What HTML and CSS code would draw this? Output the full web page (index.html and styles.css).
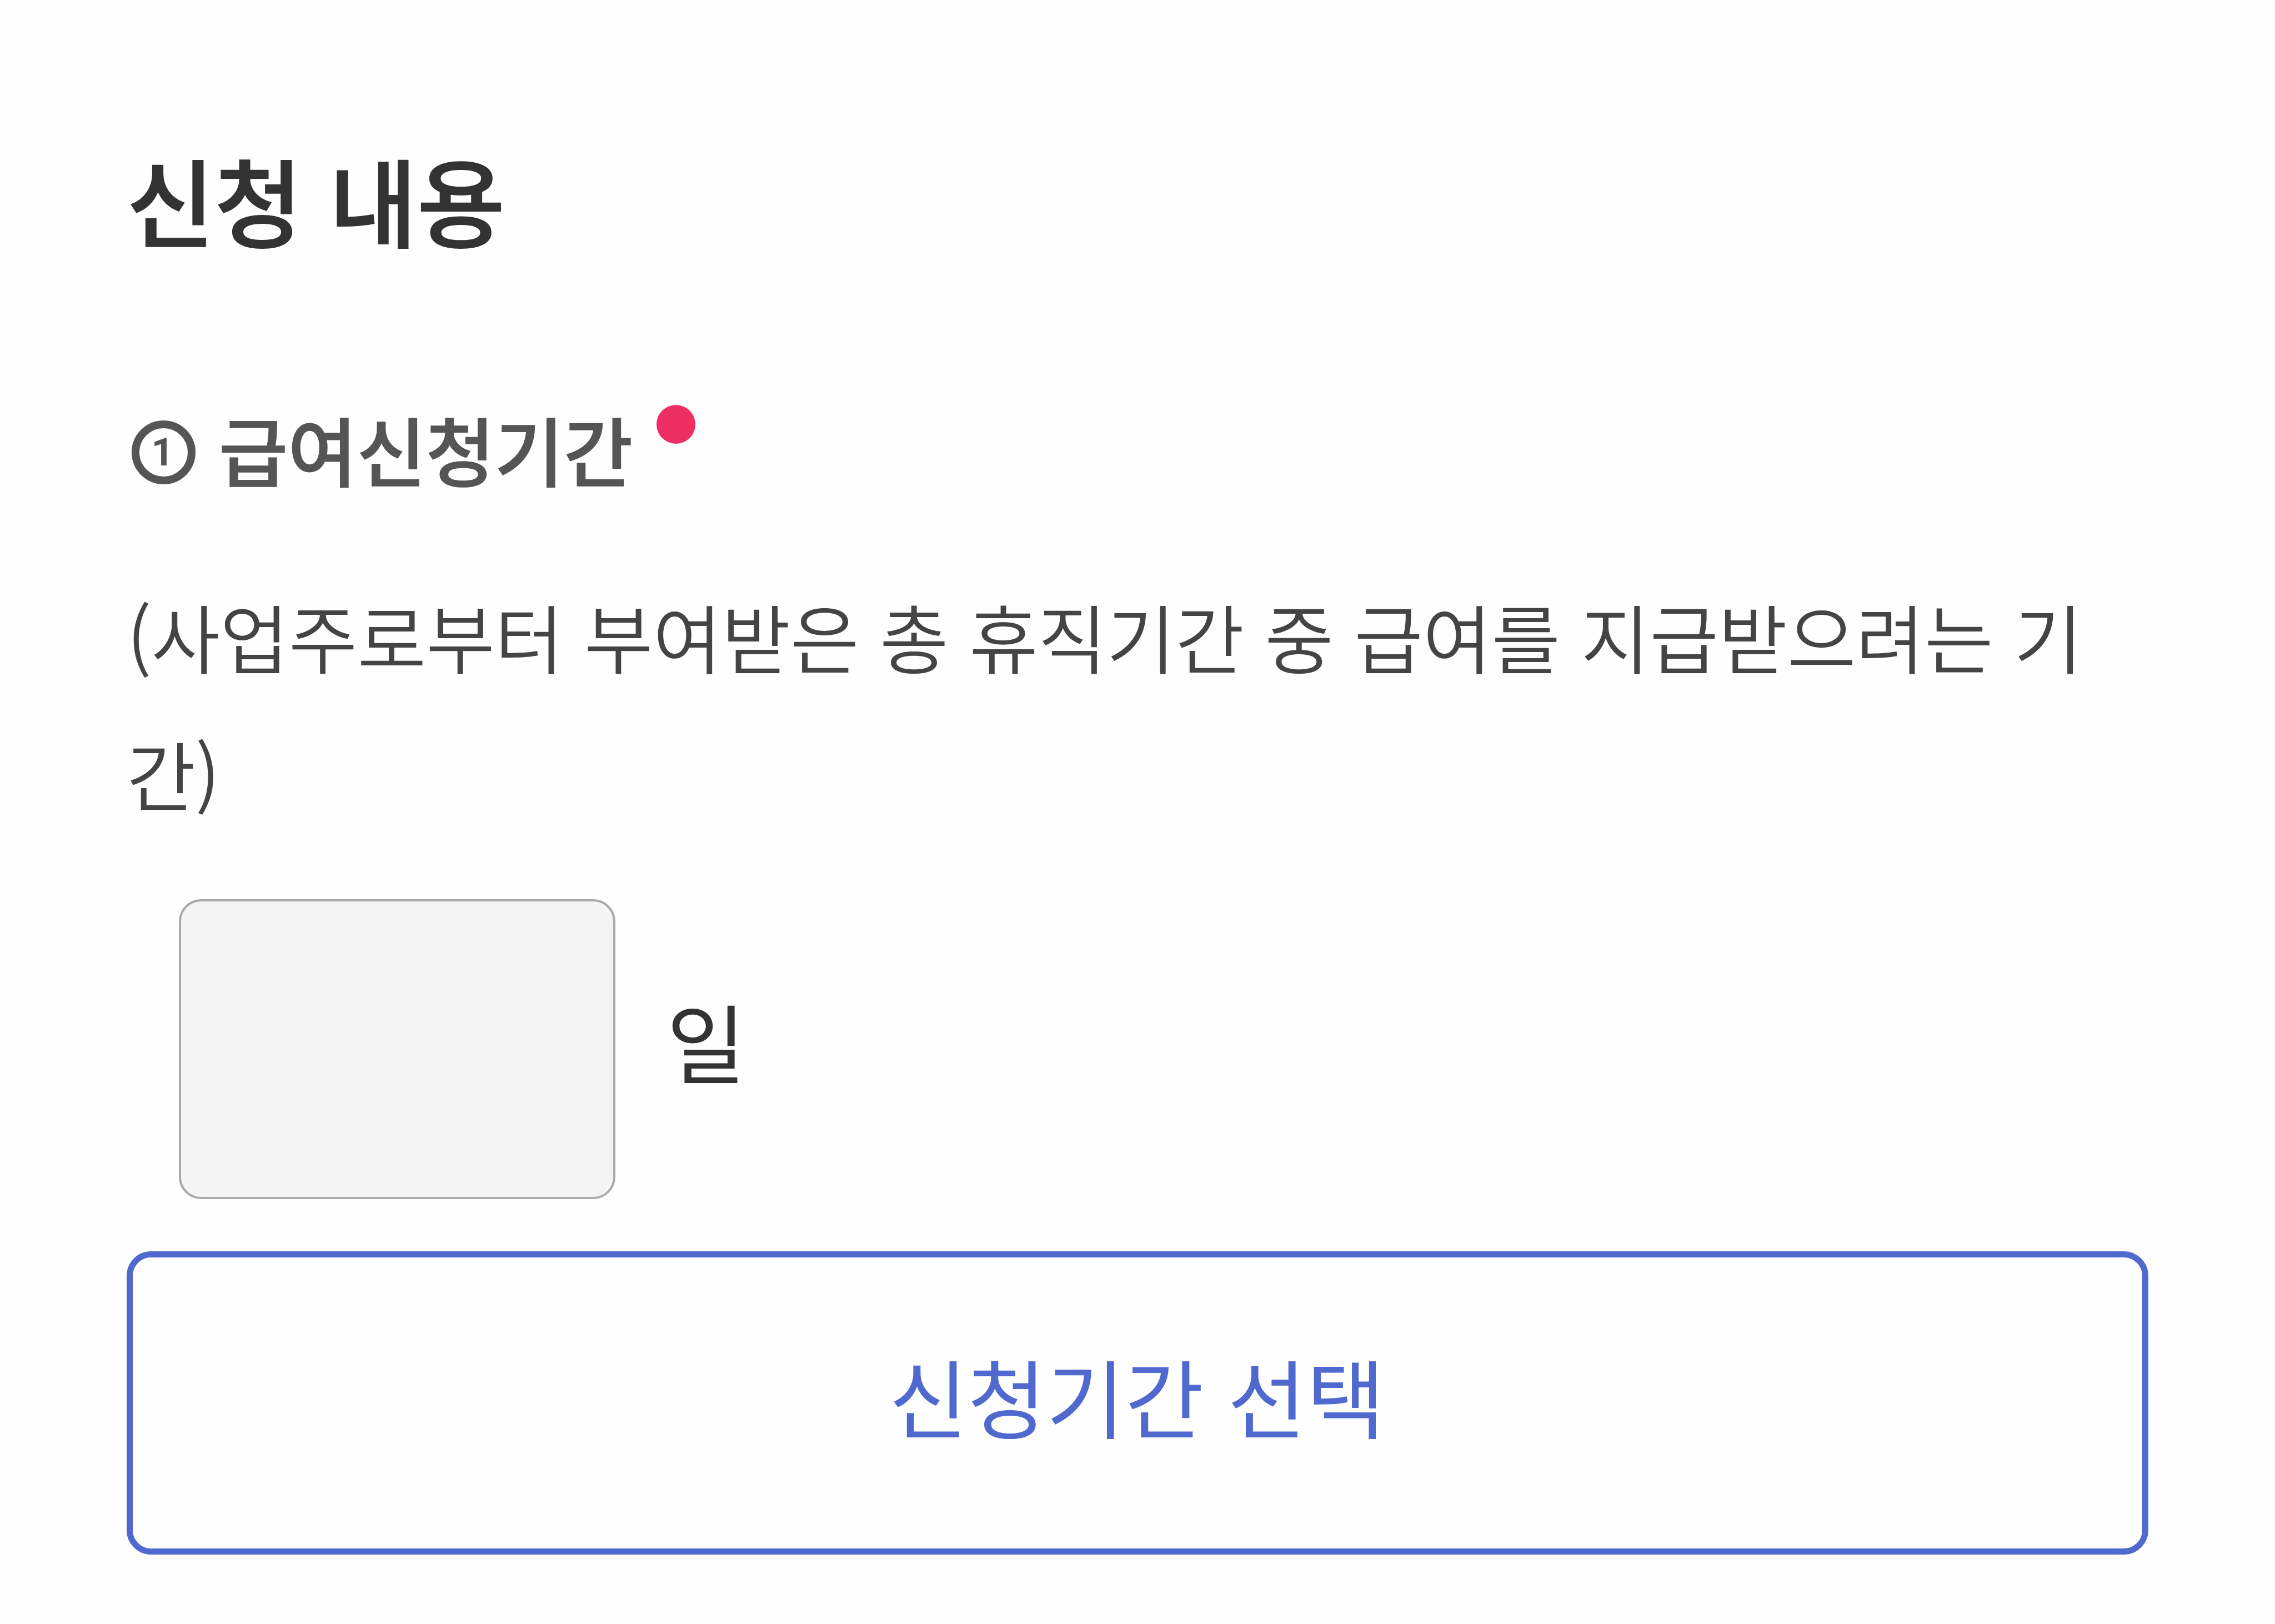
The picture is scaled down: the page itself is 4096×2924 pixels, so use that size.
FILE: index.html
```html
<!DOCTYPE html>
<html lang="ko">
<head>
  <meta charset="UTF-8">
  <meta name="viewport" content="width=device-width, initial-scale=1.0">
  <title>신청 내용</title>
  <link rel="stylesheet" href="styles.css">
</head>
<body>
  <main class="form-container">
    <h1 class="form-title">신청 내용</h1>
    <div class="field-label">
      <span class="number-icon">1</span>
      <h2>급여신청기간</h2>
      <span class="required-dot"></span>
    </div>
    <p class="field-desc">(사업주로부터 부여받은 총 휴직기간 중 급여를 지급받으려는 기<br>간)</p>
    <div class="days-row">
      <input class="days-input" type="text" aria-label="일수" readonly>
      <span class="days-unit">일</span>
    </div>
    <button class="select-button" type="button">신청기간 선택</button>
  </main>
</body>
</html>
```
FILE: styles.css
```css
* {
  box-sizing: border-box;
}

body {
  margin: 0;
  background-color: #fefefe;
  font-family: "Noto Sans CJK KR", sans-serif;
  color: #333;
}

.form-container {
  display: flex;
  flex-direction: column;
  height: 2924px;
  padding: 247px 228px 0;
  overflow: hidden;
}

.form-title {
  margin: 0;
  height: 220px;
  line-height: 220px;
  font-size: 172px;
  font-weight: 500;
  -webkit-text-stroke: 2px #333;
}

.field-label {
  display: flex;
  align-items: center;
  height: 200px;
  margin-top: 247px;
  color: #555;
}

.field-label h2 {
  margin: 0 0 14px 42px;
  line-height: 200px;
  font-size: 135px;
  font-weight: 500;
  -webkit-text-stroke: 1.5px #555;
}

.number-icon {
  display: flex;
  align-items: center;
  justify-content: center;
  width: 115px;
  height: 115px;
  margin-left: 9px;
  padding-right: 4px;
  border: 14px solid #555;
  border-radius: 50%;
  font-family: Roboto, sans-serif;
  font-size: 70px;
  font-weight: 700;
  line-height: 1;
}

.required-dot {
  width: 70px;
  height: 70px;
  margin-left: 43px;
  margin-bottom: 101px;
  border-radius: 50%;
  background-color: #ee2f64;
}

.field-desc {
  height: 490px;
  margin: 107px 0 0;
  line-height: 247px;
  font-size: 135px;
  font-weight: 350;
  letter-spacing: -0.5px;
  color: #444;
  white-space: nowrap;
}

.days-row {
  display: flex;
  align-items: center;
  height: 540px;
  margin: 108px 0 0 94px;
}

.days-input {
  width: 786px;
  height: 540px;
  border: 4px solid #aaa;
  border-radius: 40px;
  background-color: #f4f4f4;
}

.days-unit {
  margin-left: 92px;
  padding-bottom: 36px;
  font-size: 155px;
}

.select-button {
  height: 546px;
  margin-top: 94px;
  padding: 0 2px 30px 0;
  border: 11px solid #4f69cf;
  border-radius: 44px;
  background-color: #fefefe;
  color: #4f69cf;
  font-family: inherit;
  font-size: 154px;
}
```
